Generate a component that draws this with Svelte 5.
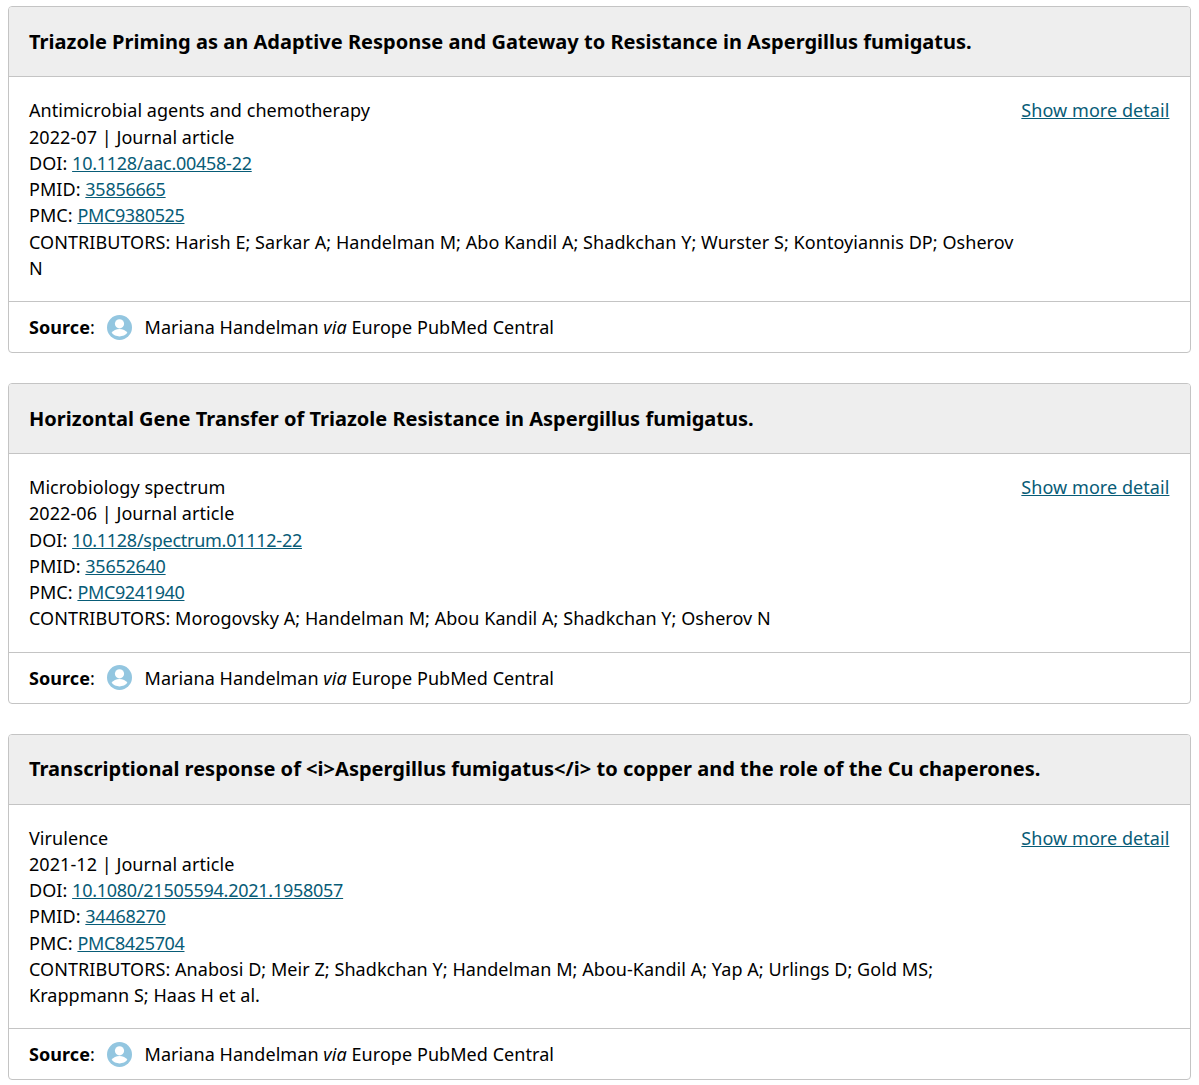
<script>
  const works = [
    {
      title: 'Triazole Priming as an Adaptive Response and Gateway to Resistance in Aspergillus fumigatus.',
      journal: 'Antimicrobial agents and chemotherapy',
      date: '2022-07',
      doi: '10.1128/aac.00458-22',
      pmid: '35856665',
      pmc: 'PMC9380525',
      contributors: 'Harish E; Sarkar A; Handelman M; Abo Kandil A; Shadkchan Y; Wurster S; Kontoyiannis DP; Osherov N',
    },
    {
      title: 'Horizontal Gene Transfer of Triazole Resistance in Aspergillus fumigatus.',
      journal: 'Microbiology spectrum',
      date: '2022-06',
      doi: '10.1128/spectrum.01112-22',
      pmid: '35652640',
      pmc: 'PMC9241940',
      contributors: 'Morogovsky A; Handelman M; Abou Kandil A; Shadkchan Y; Osherov N',
    },
    {
      title: 'Transcriptional response of <i>Aspergillus fumigatus</i> to copper and the role of the Cu chaperones.',
      journal: 'Virulence',
      date: '2021-12',
      doi: '10.1080/21505594.2021.1958057',
      pmid: '34468270',
      pmc: 'PMC8425704',
      contributors: 'Anabosi D; Meir Z; Shadkchan Y; Handelman M; Abou-Kandil A; Yap A; Urlings D; Gold MS; Krappmann S; Haas H et al.',
    },
  ];
</script>

<div class="list">
  {#each works as work}
    <section class="card">
      <h3>{work.title}</h3>
      <div class="body">
        <div class="meta">
          <div>{work.journal}</div>
          <div>{work.date} | Journal article</div>
          <div>DOI: <a class="id" href="#doi">{work.doi}</a></div>
          <div>PMID: <a class="id" href="#pmid">{work.pmid}</a></div>
          <div>PMC: <a class="id pmc" href="#pmc">{work.pmc}</a></div>
          <div>CONTRIBUTORS: {work.contributors}</div>
        </div>
        <a class="more" href="#more">Show more detail</a>
      </div>
      <div class="source">
        <b>Source</b>:
        <svg class="avatar" viewBox="0 0 25 25" aria-hidden="true">
          <circle cx="12.5" cy="12.5" r="12.5" fill="#93c6e0" />
          <circle cx="12.5" cy="8.800" r="4.600" fill="#fff" />
          <path d="M4.600 17.800c1.600-2.700 4.600-3.900 7.900-3.900s6.300 1.200 7.900 3.900c-1.800 2.200-4.700 3.600-7.900 3.600s-6.100-1.400-7.900-3.600z" fill="#fff" />
        </svg>
        <span>Mariana Handelman <i>via</i> Europe PubMed Central</span>
      </div>
    </section>
  {/each}
</div>

<style>
  :global(body) {
    background: #fff;
    color: #000;
    font-family: "Noto Sans", "Open Sans", sans-serif;
    font-size: 18px;
    line-height: 26.25px;
    letter-spacing: 0.06px;
  }

  .list {
    display: flex;
    flex-direction: column;
    gap: 30px;
    padding: 6.4px 8px 0;
  }

  .card {
    border: 1px solid #c4c4c4;
    border-radius: 4px;
  }

  h3 {
    margin: 0;
    padding: 19.8px 20px 0;
    height: 70px;
    box-sizing: border-box;
    background: #eee;
    border-bottom: 1px solid #c4c4c4;
    border-radius: 3px 3px 0 0;
    font-size: 20px;
    font-weight: 700;
    line-height: 29px;
    letter-spacing: 0.02px;
  }

  .body {
    display: flex;
    justify-content: space-between;
    gap: 6px;
    padding: 20px;
    border-bottom: 1px solid #c4c4c4;
  }

  .meta {
    flex: 1;
  }

  a {
    color: #085c77;
    text-decoration: underline;
  }

  .id {
    letter-spacing: -0.26px;
  }

  .pmc {
    letter-spacing: -0.36px;
  }

  .more {
    flex: none;
    margin-right: 0.6px;
  }

  .source {
    display: flex;
    align-items: center;
    height: 50px;
    padding: 0 20px;
    white-space: pre;
  }

  .avatar {
    width: 25px;
    height: 25px;
    margin: 0 13px 0 7px;
  }
</style>
